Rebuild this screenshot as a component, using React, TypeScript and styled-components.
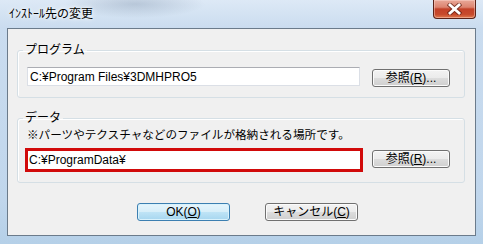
import React from "react";
import styled, { createGlobalStyle } from "styled-components";

const GlobalStyle = createGlobalStyle`
  html, body {
    margin: 0;
    padding: 0;
  }
  body {
    font-family: "Liberation Sans", "Noto Sans CJK JP", sans-serif;
    font-size: 12px;
    color: #000;
  }
`;

const Window = styled.div`
  width: 483px;
  height: 244px;
  box-sizing: border-box;
  padding: 0 7px 8px 7px;
  display: flex;
  flex-direction: column;
  background:
    radial-gradient(ellipse 70px 14px at 135px 4px, rgba(120, 140, 165, 0.35), rgba(120, 140, 165, 0)),
    linear-gradient(to bottom, #dde9f6 0px, #cadcef 28px, #c0d6ec 200px, #b5d0e8 100%);
`;

const TitleBar = styled.div`
  height: 28px;
  display: flex;
  align-items: flex-start;
`;

const Title = styled.div`
  padding: 7px 0 0 2px;
  line-height: 14px;
  text-shadow: 0 0 6px rgba(255, 255, 255, 0.95), 0 0 3px rgba(255, 255, 255, 0.9);
`;

const CloseButton = styled.div`
  margin-left: auto;
  width: 43px;
  height: 19px;
  box-sizing: border-box;
  border: 1px solid #5a2218;
  border-top: none;
  border-radius: 0 0 4px 4px;
  display: flex;
  align-items: center;
  justify-content: center;
  background: linear-gradient(
    to bottom,
    #e9a898 0%,
    #dc8470 40%,
    #c34128 50%,
    #c74a2c 80%,
    #e07a4e 100%
  );
  box-shadow: inset 0 0 0 1px rgba(255, 220, 210, 0.45);
`;

const Client = styled.div`
  flex: 1;
  box-sizing: border-box;
  border: 1px solid #6b7b8b;
  background: #f0f0f0;
  padding: 14px 10px 0 9px;
  display: flex;
  flex-direction: column;
`;

const Group = styled.fieldset<{ $gap?: number }>`
  margin: ${(p) => p.$gap ?? 0}px 0 0 0;
  padding: 0 0 10px 0;
  border: 1px solid #d5dfe5;
  border-radius: 3px;
  box-shadow: inset 1px 1px 0 #fff;
  min-width: 0;
`;

const Legend = styled.legend`
  margin-left: 5px;
  padding: 0 2px;
  line-height: 14px;
`;

const Note = styled.div`
  margin: 3px 0 0 9px;
  line-height: 14px;
  font-size: 11.6px;
`;

const Row = styled.div<{ $top: number }>`
  display: flex;
  align-items: flex-start;
  margin-top: ${(p) => p.$top}px;
  padding-left: 9px;
`;

const PathField = styled.div<{ $highlight?: boolean }>`
  box-sizing: border-box;
  background: #fff;
  display: flex;
  align-items: center;
  padding-left: ${(p) => (p.$highlight ? 1 : 2)}px;
  width: ${(p) => (p.$highlight ? 338 : 333)}px;
  height: ${(p) => (p.$highlight ? 24 : 19)}px;
  margin-left: ${(p) => (p.$highlight ? -2 : 0)}px;
  margin-right: ${(p) => (p.$highlight ? 9 : 12)}px;
  border: ${(p) => (p.$highlight ? "3px solid #d10a0a" : "1px solid #dbdfe6")};
  ${(p) => (p.$highlight ? "" : "border-top-color: #abadb3;")}
  white-space: nowrap;
`;

const Button = styled.div<{ $primary?: boolean; $width?: number }>`
  box-sizing: border-box;
  width: ${(p) => p.$width ?? 78}px;
  height: 18px;
  margin-top: 2px;
  border: 1px solid ${(p) => (p.$primary ? "#3c7fb1" : "#707070")};
  border-radius: 3px;
  display: flex;
  align-items: center;
  justify-content: center;
  line-height: 14px;
  white-space: nowrap;
  box-shadow: inset 0 0 0 1px ${(p) => (p.$primary ? "#d9f2fc" : "#fbfbfb")};
  background: ${(p) =>
    p.$primary
      ? "linear-gradient(to bottom, #e6f5fc 0%, #d6eef9 50%, #bfe4f6 50%, #a6d6ef 100%)"
      : "linear-gradient(to bottom, #f3f3f3 0%, #ebebeb 50%, #dddddd 50%, #cfcfcf 100%)"};

  u {
    text-decoration-thickness: 1px;
    text-underline-offset: 1px;
  }
`;

const ButtonRow = styled.div`
  display: flex;
  gap: 35px;
  margin-top: 18px;
  padding-left: 120px;
`;

const CloseGlyph: React.FC = () => (
  <svg width="15" height="12" viewBox="0 0 15 12">
    <path d="M3 2 L12 10 M12 2 L3 10" stroke="#5b1c10" strokeWidth="4.6" strokeLinecap="square" opacity="0.7" />
    <path d="M3 2 L12 10 M12 2 L3 10" stroke="#ffffff" strokeWidth="2.8" strokeLinecap="square" />
  </svg>
);

const BrowseButton: React.FC = () => (
  <Button>
    参照(<u>R</u>)...
  </Button>
);

const App: React.FC = () => {
  return (
    <>
      <GlobalStyle />
      <Window>
        <TitleBar>
          <Title>ｲﾝｽﾄｰﾙ先の変更</Title>
          <CloseButton>
            <CloseGlyph />
          </CloseButton>
        </TitleBar>
        <Client>
          <Group>
            <Legend>プログラム</Legend>
            <Row $top={10}>
              <PathField>C:¥Program Files¥3DMHPRO5</PathField>
              <BrowseButton />
            </Row>
          </Group>
          <Group $gap={13}>
            <Legend>データ</Legend>
            <Note>※パーツやテクスチャなどのファイルが格納される場所です。</Note>
            <Row $top={6}>
              <PathField $highlight>C:¥ProgramData¥</PathField>
              <BrowseButton />
            </Row>
          </Group>
          <ButtonRow>
            <Button $primary $width={93}>
              OK(<u>O</u>)
            </Button>
            <Button $width={93}>
              キャンセル(<u>C</u>)
            </Button>
          </ButtonRow>
        </Client>
      </Window>
    </>
  );
};

export default App;
